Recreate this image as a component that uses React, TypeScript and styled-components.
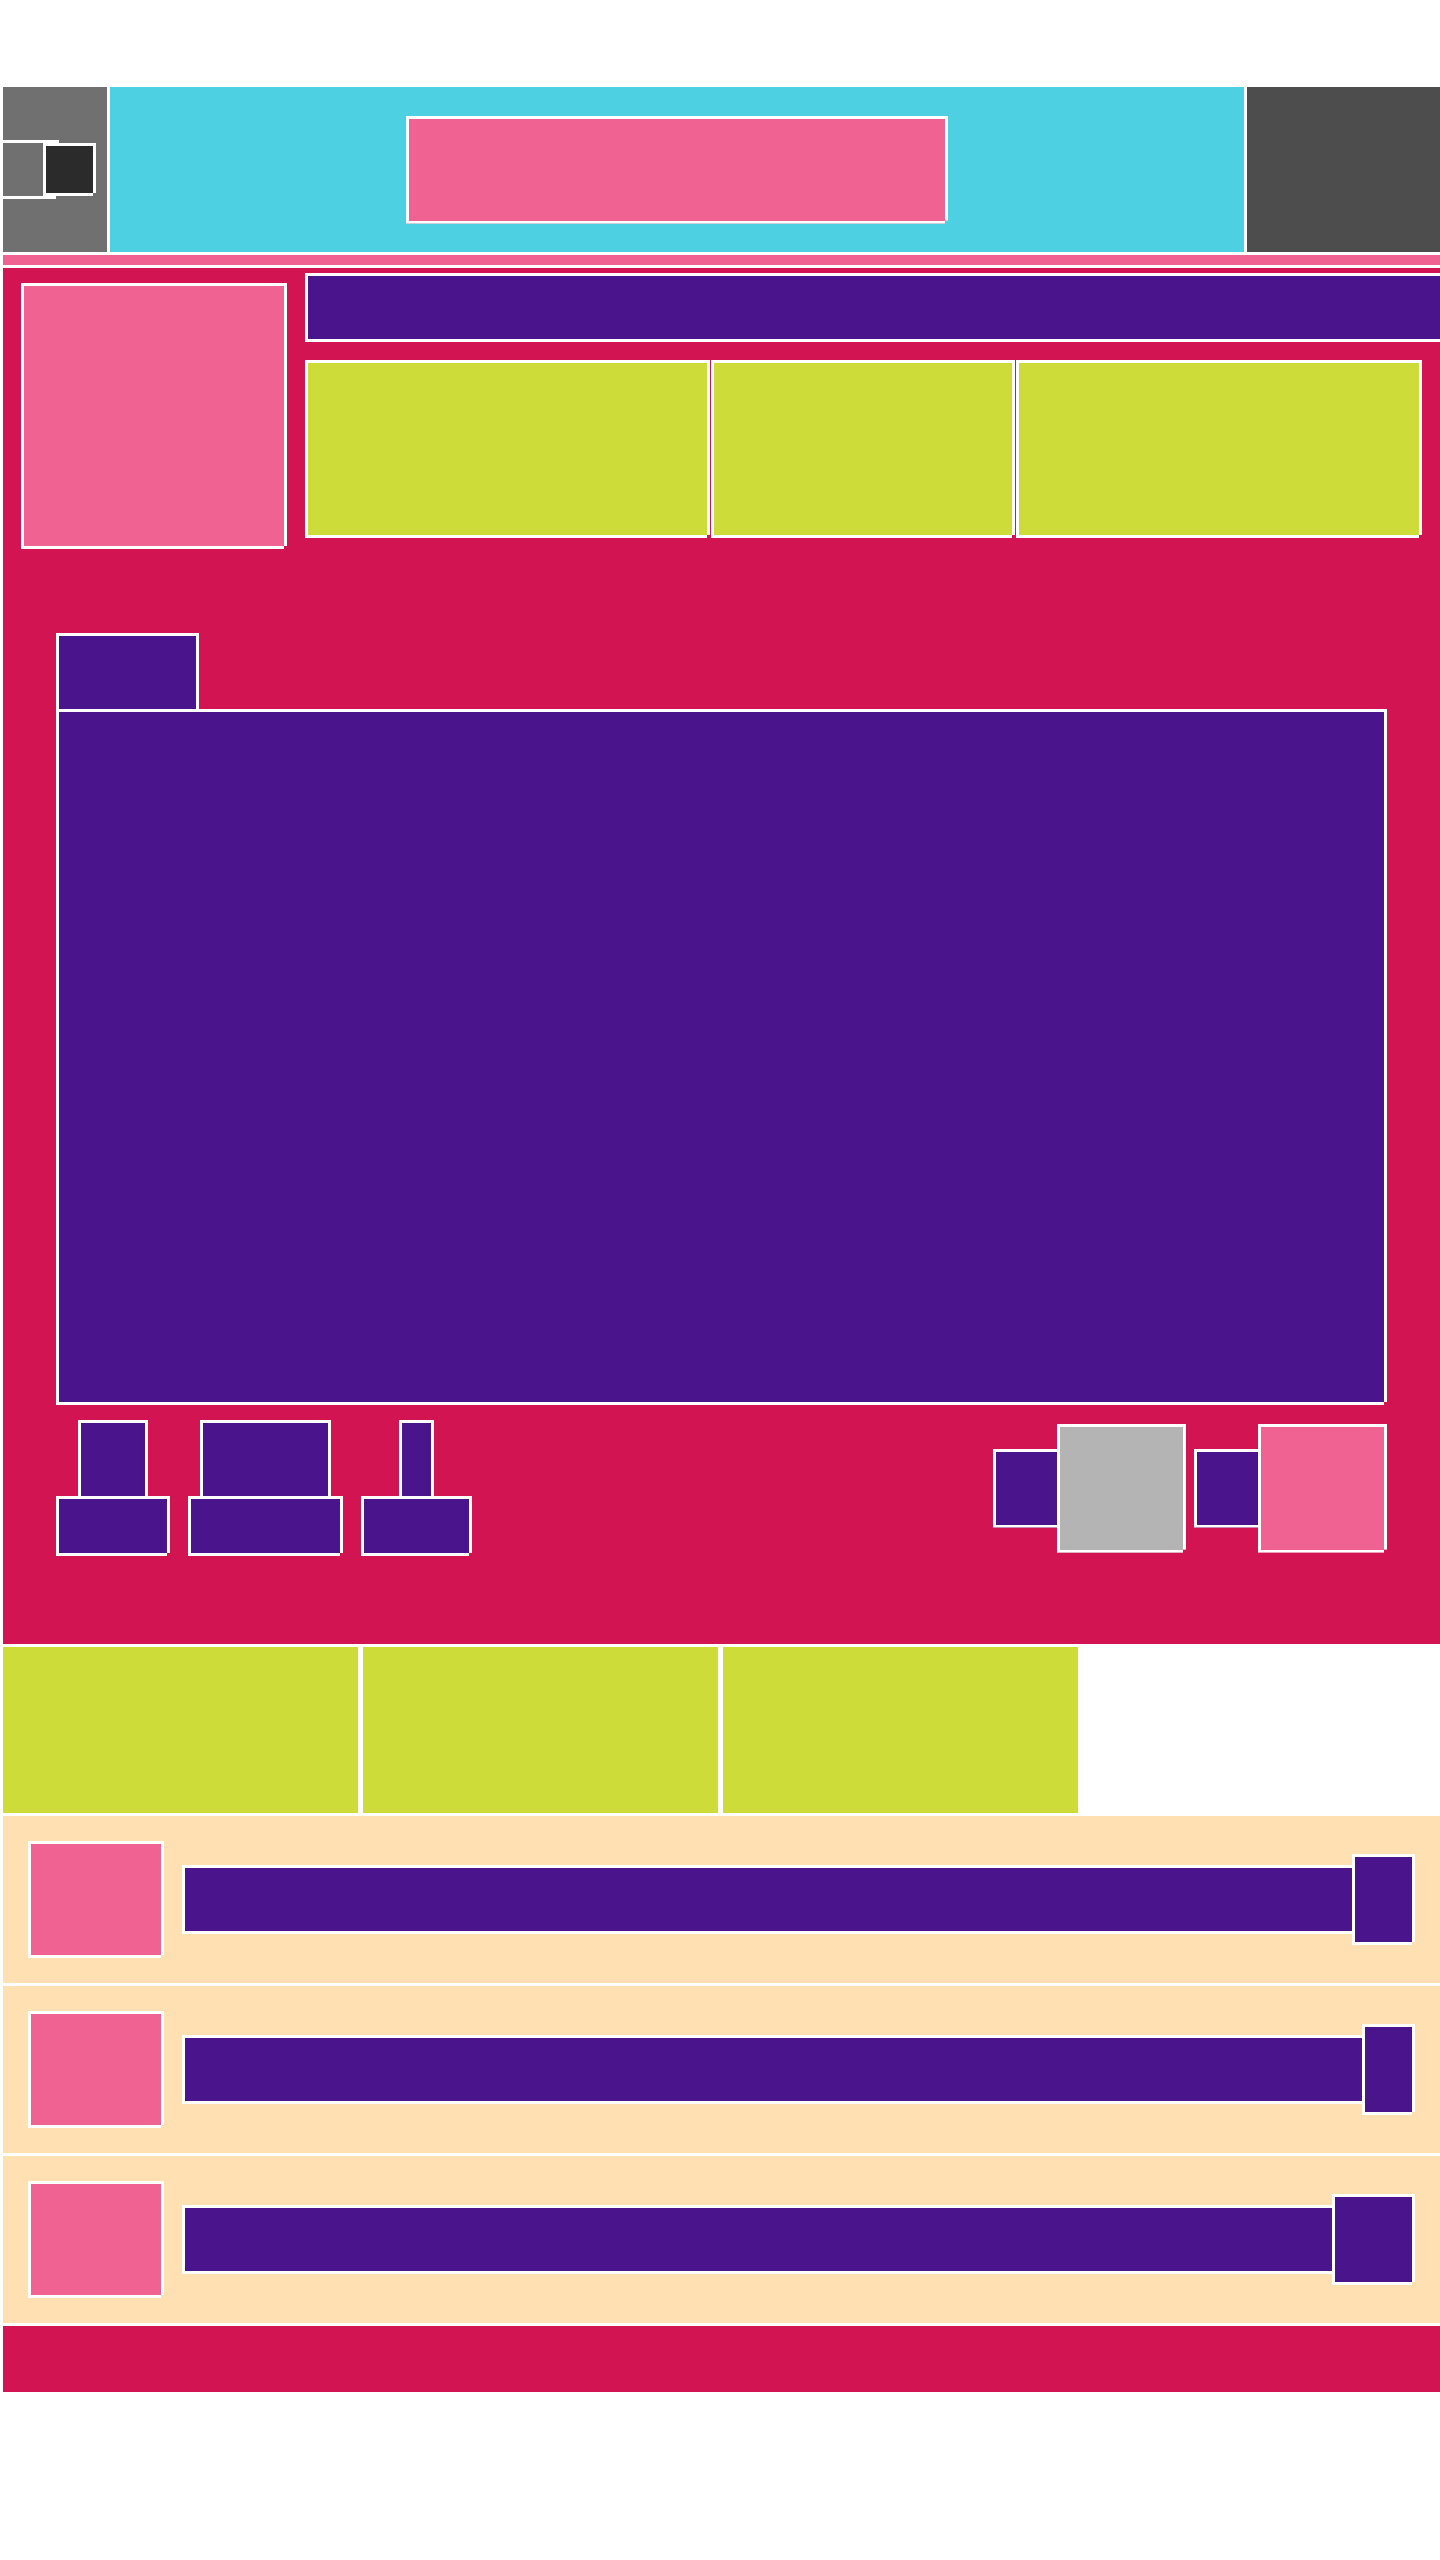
import React from "react";
import styled, { createGlobalStyle } from "styled-components";

const GlobalStyle = createGlobalStyle`
    html, body {
        margin: 0;
        padding: 0;
        background: #ffffff;
        font-family: "Liberation Sans", Arial, sans-serif;
    }
    * {
        box-sizing: border-box;
    }
`;

const colors = {
    gray: "#707070",
    darkGray: "#4d4d4d",
    darker: "#2b2b2b",
    cyan: "#4dd0e1",
    pink: "#f06292",
    red: "#d21552",
    purple: "#4a148c",
    lime: "#cddc39",
    peach: "#ffe0b2",
    silver: "#b4b4b4",
};

const Page = styled.div`
    width: 1440px;
    padding: 87px 0 0 3px;
    display: flex;
    flex-direction: column;
    gap: 3px;
    overflow: hidden;
`;

// framed block, bottom-right corner of the frame is notched like the mockup
const Block = styled.div<{ $bg: string; $w?: number; $h?: number }>`
    background: ${(p) => p.$bg};
    border: 3px solid #fff;
    flex-shrink: 0;
    clip-path: polygon(
        0 0,
        100% 0,
        100% calc(100% - 3px),
        calc(100% - 3px) calc(100% - 3px),
        calc(100% - 3px) 100%,
        0 100%
    );
    ${(p) => (p.$w ? `width: ${p.$w}px;` : "")}
    ${(p) => (p.$h ? `height: ${p.$h}px;` : "")}
`;

/* header */
const Header = styled.header`
    display: flex;
    gap: 3px;
    height: 165px;
`;

const LogoPanel = styled.div`
    width: 104px;
    background: ${colors.gray};
    display: flex;
    align-items: center;
`;

const LogoMain = styled(Block)`
    margin-left: -3px;
`;

const LogoMark = styled(Block)`
    margin-left: -16px;
`;

const SearchPanel = styled.div`
    width: 1134px;
    background: ${colors.cyan};
    display: flex;
    align-items: center;
    justify-content: center;
`;

const AccountPanel = styled.div`
    flex: 1;
    background: ${colors.darkGray};
`;

const Strip = styled.div`
    height: 10px;
    background: ${colors.pink};
`;

/* hero */
const Hero = styled.section`
    background: ${colors.red};
    padding: 5px 18px 88px;
    overflow: hidden;
`;

const TopRow = styled.div`
    display: flex;
    align-items: flex-start;
    gap: 18px;
`;

const Cover = styled(Block)`
    margin-top: 10px;
`;

const InfoColumn = styled.div`
    flex: 1;
    display: flex;
    flex-direction: column;
    gap: 18px;
`;

const TitleBar = styled(Block)`
    margin-right: -60px;
`;

const StatRow = styled.div`
    display: flex;
    gap: 1px;
`;

const Stage = styled.div`
    margin: 84px 35px 0;
    display: flex;
    flex-direction: column;
    align-items: flex-start;
`;

const Tab = styled(Block)`
    margin-bottom: -3px;
    position: relative;
`;

const Screen = styled(Block)`
    width: 100%;
`;

const Controls = styled.div`
    margin-top: 15px;
    width: 100%;
    display: flex;
    align-items: center;
    justify-content: space-between;
`;

const ControlGroup = styled.div`
    display: flex;
    gap: 18px;
`;

const Control = styled.div`
    display: flex;
    flex-direction: column;
    align-items: center;
`;

const ControlCap = styled(Block)`
    margin-bottom: -3px;
`;

const Actions = styled.div`
    display: flex;
    align-items: center;
`;

const ActionTag = styled(Block)<{ $gap?: number }>`
    margin-left: ${(p) => p.$gap ?? 0}px;
`;

const ActionTile = styled(Block)`
    margin-left: -3px;
`;

/* lists */
const TileRow = styled.div`
    display: flex;
    gap: 5px;
    height: 166px;
`;

const Tile = styled.div`
    width: 355px;
    background: ${colors.lime};
`;

const ListRow = styled.div`
    height: 167px;
    background: ${colors.peach};
    padding: 0 25px;
    display: flex;
    align-items: center;
`;

const Thumb = styled(Block)`
    margin-right: 18px;
`;

const Bar = styled(Block)`
    flex: 1;
    height: 69px;
`;

const EndCap = styled(Block)`
    margin-left: -3px;
    height: 91px;
`;

const Footer = styled.footer`
    height: 66px;
    background: ${colors.red};
`;

const controls = [
    { cap: 70, base: 114 },
    { cap: 131, base: 155 },
    { cap: 35, base: 111 },
];

const rows = [63, 53, 83];

export default function App() {
    return (
        <>
            <GlobalStyle />
            <Page>
                <Header>
                    <LogoPanel>
                        <LogoMain $bg={colors.gray} $w={59} $h={59} />
                        <LogoMark $bg={colors.darker} $w={53} $h={53} />
                    </LogoPanel>
                    <SearchPanel>
                        <Block $bg={colors.pink} $w={542} $h={108} />
                    </SearchPanel>
                    <AccountPanel />
                </Header>
                <Strip />
                <Hero>
                    <TopRow>
                        <Cover $bg={colors.pink} $w={266} $h={266} />
                        <InfoColumn>
                            <TitleBar $bg={colors.purple} $h={69} />
                            <StatRow>
                                <Block $bg={colors.lime} $w={405} $h={178} />
                                <Block $bg={colors.lime} $w={304} $h={178} />
                                <Block $bg={colors.lime} $w={406} $h={178} />
                            </StatRow>
                        </InfoColumn>
                    </TopRow>
                    <Stage>
                        <Tab $bg={colors.purple} $w={143} $h={79} />
                        <Screen $bg={colors.purple} $h={696} />
                        <Controls>
                            <ControlGroup>
                                {controls.map((c, i) => (
                                    <Control key={i}>
                                        <ControlCap $bg={colors.purple} $w={c.cap} $h={79} />
                                        <Block $bg={colors.purple} $w={c.base} $h={60} />
                                    </Control>
                                ))}
                            </ControlGroup>
                            <Actions>
                                <ActionTag $bg={colors.purple} $w={67} $h={79} />
                                <ActionTile $bg={colors.silver} $w={129} $h={129} />
                                <ActionTag $bg={colors.purple} $w={67} $h={79} $gap={8} />
                                <ActionTile $bg={colors.pink} $w={129} $h={129} />
                            </Actions>
                        </Controls>
                    </Stage>
                </Hero>
                <TileRow>
                    <Tile />
                    <Tile />
                    <Tile />
                </TileRow>
                {rows.map((w, i) => (
                    <ListRow key={i}>
                        <Thumb $bg={colors.pink} $w={136} $h={117} />
                        <Bar $bg={colors.purple} />
                        <EndCap $bg={colors.purple} $w={w} />
                    </ListRow>
                ))}
                <Footer />
            </Page>
        </>
    );
}
